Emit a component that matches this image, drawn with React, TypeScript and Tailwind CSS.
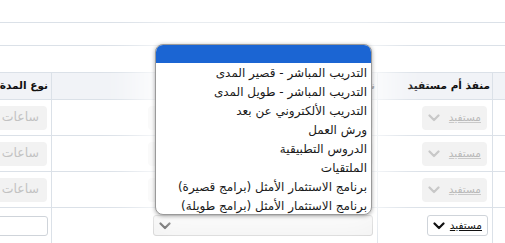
import React from "react";

const Chevron = ({ color }: { color: string }) => (
  <svg width={12} height={8} viewBox="0 0 12 8" fill="none" className="shrink-0">
    <path d="M1.5 1.5 L6 6 L10.5 1.5" stroke={color} strokeWidth={2.2} strokeLinecap="round" strokeLinejoin="round" />
  </svg>
);

const options = [
  "التدريب المباشر - قصير المدى",
  "التدريب المباشر - طويل المدى",
  "التدريب الألكتروني عن بعد",
  "ورش العمل",
  "الدروس التطبيقية",
  "الملتقيات",
  "برنامج الاستثمار الأمثل (برامج قصيرة)",
  "برنامج الاستثمار الأمثل (برامج طويلة)",
];

function DisabledRow() {
  return (
    <div className="flex h-[36px] border-b border-[#dbe1e8]">
      <div className="w-[13px] shrink-0 border-l border-[#dbe1e8]" />
      <div className="w-[115px] shrink-0 border-l border-[#dbe1e8] flex items-center pr-[5px]">
        <div className="w-[65px] h-[24px] rounded-[4px] bg-[#f2f2f2] flex items-center justify-between pr-[6px] pl-[6px]">
          <span className="text-[10.5px] text-[#b9b9b9] underline decoration-[#c9c9c9] whitespace-nowrap">مستفيد</span>
          <Chevron color="#c8c8c8" />
        </div>
      </div>
      <div className="w-[326px] shrink-0 border-l border-[#dbe1e8] flex items-center pr-[4px]">
        <div className="w-[225px] h-[24px] rounded-[4px] bg-[#f2f2f2]" />
      </div>
      <div className="w-[100px] shrink-0 flex items-center pr-[4px]">
        <div className="w-[70px] h-[24px] rounded-[4px] bg-[#f2f2f2] flex items-center pr-[8px]">
          <span className="text-[12.5px] text-[#c2c2c2] whitespace-nowrap">ساعات</span>
        </div>
      </div>
    </div>
  );
}

export default function App() {
  return (
    <div
      dir="rtl"
      className="relative w-[505px] h-[243px] overflow-hidden bg-white text-[#111]"
      style={{ fontFamily: '"DejaVu Sans", sans-serif' }}
    >
      <div className="h-[23px] border-b border-[#dbe1e8]" />
      <div className="h-[23px] border-b border-[#dbe1e8]" />
      <div className="h-[27px] border-b border-[#dbe1e8]" />
      {/* header */}
      <div className="flex h-[27px] border-b border-[#dbe1e8] bg-[#f1f3f7]">
        <div className="w-[13px] shrink-0 border-l border-[#dbe1e8]" />
        <div className="w-[115px] shrink-0 border-l border-[#dbe1e8] flex items-center pr-[2px]">
          <span className="text-[10.5px] font-bold whitespace-nowrap">منفذ أم مستفيد</span>
        </div>
        <div className="w-[326px] shrink-0 border-l border-[#dbe1e8] flex items-center pr-[2px]">
          <span className="text-[10.5px] font-bold whitespace-nowrap">نوع التدريب</span>
        </div>
        <div className="w-[100px] shrink-0 flex items-center pr-[3px]">
          <span className="text-[10.5px] font-bold whitespace-nowrap">نوع المدة</span>
        </div>
      </div>
      <DisabledRow />
      <DisabledRow />
      <DisabledRow />
      {/* row 4 */}
      <div className="flex h-[36px] border-b border-[#dbe1e8]">
        <div className="w-[13px] shrink-0 border-l border-[#dbe1e8]" />
        <div className="w-[115px] shrink-0 border-l border-[#dbe1e8] flex items-center pr-[4px]">
          <div className="w-[61px] h-[21px] rounded-[3px] bg-white border border-[#cfd4da] flex items-center justify-between pr-[5px] pl-[5px]">
            <span className="text-[10.5px] text-[#111] underline whitespace-nowrap">مستفيد</span>
            <Chevron color="#111" />
          </div>
        </div>
        <div className="w-[326px] shrink-0 border-l border-[#dbe1e8] flex items-center pr-[4px]">
          <div className="w-[220px] h-[21px] rounded-[3px] bg-[#f0f0f0] border border-[#c9c9c9] flex items-center justify-end pl-[5px]">
            <Chevron color="#111" />
          </div>
        </div>
        <div className="w-[100px] shrink-0 flex items-center pr-[3px]">
          <div className="w-[70px] h-[20px] rounded-[3px] bg-white border border-[#cfd4da]" />
        </div>
      </div>

      {/* open dropdown */}
      <div className="absolute left-[155px] top-[44px] w-[217px] h-[171px] rounded-[8px] border border-[#9a9a9a] bg-white overflow-hidden shadow-[0_1px_4px_rgba(0,0,0,0.35),0_0_40px_18px_rgba(255,255,255,0.85)]">
        <div className="h-[18px] bg-[#1b65d3]" />
        {options.map((o) => (
          <div key={o} className="h-[19px] flex items-center pr-[4px] text-[12px] text-[#1a1a1a] whitespace-nowrap">
            {o}
          </div>
        ))}
      </div>
    </div>
  );
}
